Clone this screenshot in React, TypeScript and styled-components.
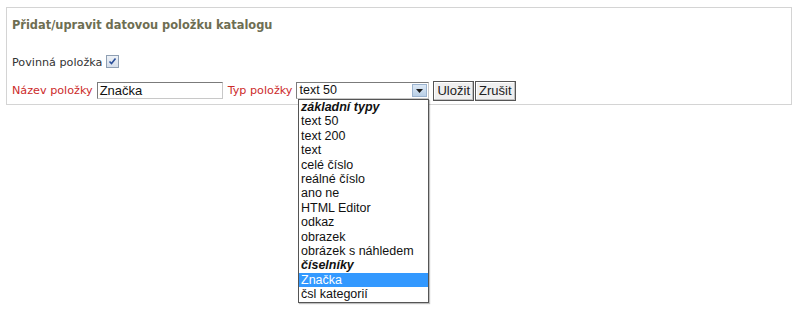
import React from 'react';
import styled, { createGlobalStyle } from 'styled-components';

const GlobalStyle = createGlobalStyle`
  html, body {
    margin: 0;
    background: #ffffff;
    font-family: "DejaVu Sans", Verdana, sans-serif;
  }
`;

const Page = styled.div`
  position: relative;
  min-height: 322px;
  padding-top: 7px;
  box-sizing: border-box;
`;

const Panel = styled.div`
  margin-left: 6px;
  width: 774px;
  height: 96px;
  border: 1px solid #d4d4d4;
  padding: 0 5px;
`;

const Title = styled.h2`
  margin: 0;
  padding-top: 10px;
  font-size: 11.4px;
  font-weight: bold;
  color: #6e6e52;
  line-height: 14px;
`;

const Row = styled.div<{ $top: number }>`
  display: flex;
  align-items: center;
  margin-top: ${(p) => p.$top}px;
  height: 19px;
`;

const Label = styled.span<{ $required?: boolean }>`
  font-size: 11.2px;
  color: ${(p) => (p.$required ? '#cc2a2a' : '#333333')};
  margin-right: 4px;
`;

const Check = styled.span`
  display: inline-block;
  width: 11px;
  height: 11px;
  border: 1px solid #8f9fb3;
  background: linear-gradient(#eef2f7, #d6deea);
  margin-top: -3px;
  position: relative;
`;

const TextInput = styled.div`
  width: 122px;
  height: 15px;
  border: 1px solid #7b7b7b;
  border-right-color: #c8c8c8;
  border-bottom-color: #c8c8c8;
  font-family: "Liberation Sans", Arial, sans-serif;
  font-size: 13px;
  line-height: 15px;
  padding-left: 2px;
  color: #111;
  margin-right: 5px;
`;

const SelectBox = styled.div`
  position: relative;
  width: 129px;
  height: 15px;
  border: 1px solid;
  border-color: #7b7b7b #c8c8c8 #c8c8c8 #7b7b7b;
  font-family: "Liberation Sans", Arial, sans-serif;
  font-size: 12.5px;
  line-height: 15px;
  padding-left: 2px;
  color: #111;
  margin-right: 4px;
`;

const Arrow = styled.span`
  position: absolute;
  right: 1px;
  top: 1px;
  width: 15px;
  height: 13px;
  background: linear-gradient(#dce8f5, #b9cfe6);
  border: 1px solid #9bb3cf;
  box-sizing: border-box;
  display: flex;
  align-items: center;
  justify-content: center;
`;

const Button = styled.button`
  font-family: "Liberation Sans", Arial, sans-serif;
  font-size: 13px;
  height: 20px;
  padding: 0 3px;
  margin: 1px 1px 0 0;
  background: #efefef;
  border: 1px solid #555;
  box-shadow: inset -1px -1px 0 #c0c0c0, inset 1px 1px 0 #ffffff;
  color: #222;
  line-height: 16px;
`;

const List = styled.ul`
  position: absolute;
  left: 298px;
  top: 99px;
  width: 129px;
  margin: 0;
  padding: 0 0 1px;
  list-style: none;
  border: 1px solid #555;
  background: #fff;
  font-family: "Liberation Sans", Arial, sans-serif;
  font-size: 12.5px;
  box-shadow: 1px 1px 1px rgba(0, 0, 0, 0.25);
  z-index: 2;
`;

const Option = styled.li<{ $group?: boolean; $selected?: boolean }>`
  height: 14.4px;
  line-height: 14.4px;
  padding-left: 2px;
  font-weight: ${(p) => (p.$group ? 'bold' : 'normal')};
  font-style: ${(p) => (p.$group ? 'italic' : 'normal')};
  background: ${(p) => (p.$selected ? '#3399ff' : 'transparent')};
  color: ${(p) => (p.$selected ? '#ffffff' : '#111')};
  white-space: nowrap;
`;

const options: { text: string; group?: boolean; selected?: boolean }[] = [
  { text: 'základní typy', group: true },
  { text: 'text 50' },
  { text: 'text 200' },
  { text: 'text' },
  { text: 'celé číslo' },
  { text: 'reálné číslo' },
  { text: 'ano ne' },
  { text: 'HTML Editor' },
  { text: 'odkaz' },
  { text: 'obrazek' },
  { text: 'obrázek s náhledem' },
  { text: 'číselníky', group: true },
  { text: 'Značka', selected: true },
  { text: 'čsl kategorií' },
];

const App: React.FC = () => {
  return (
    <Page>
      <GlobalStyle />
      <Panel>
        <Title>Přidat/upravit datovou položku katalogu</Title>
        <Row $top={21}>
          <Label>Povinná položka</Label>
          <Check>
            <svg width="11" height="11" viewBox="0 0 11 11" style={{ position: 'absolute', left: 0, top: 0 }}>
              <path d="M2.5 5.5 L4.5 7.5 L8.5 2.5" stroke="#2a4f9a" strokeWidth="1.6" fill="none" />
            </svg>
          </Check>
        </Row>
        <Row $top={9}>
          <Label $required>Název položky</Label>
          <TextInput>Značka</TextInput>
          <Label $required>Typ položky</Label>
          <SelectBox>
            text 50
            <Arrow>
              <svg width="7" height="4" viewBox="0 0 7 4">
                <path d="M0 0 H7 L3.5 4 Z" fill="#1a1a1a" />
              </svg>
            </Arrow>
          </SelectBox>
          <Button>Uložit</Button>
          <Button>Zrušit</Button>
        </Row>
      </Panel>
      <List>
        {options.map((o) => (
          <Option key={o.text} $group={o.group} $selected={o.selected}>
            {o.text}
          </Option>
        ))}
      </List>
    </Page>
  );
};

export default App;
